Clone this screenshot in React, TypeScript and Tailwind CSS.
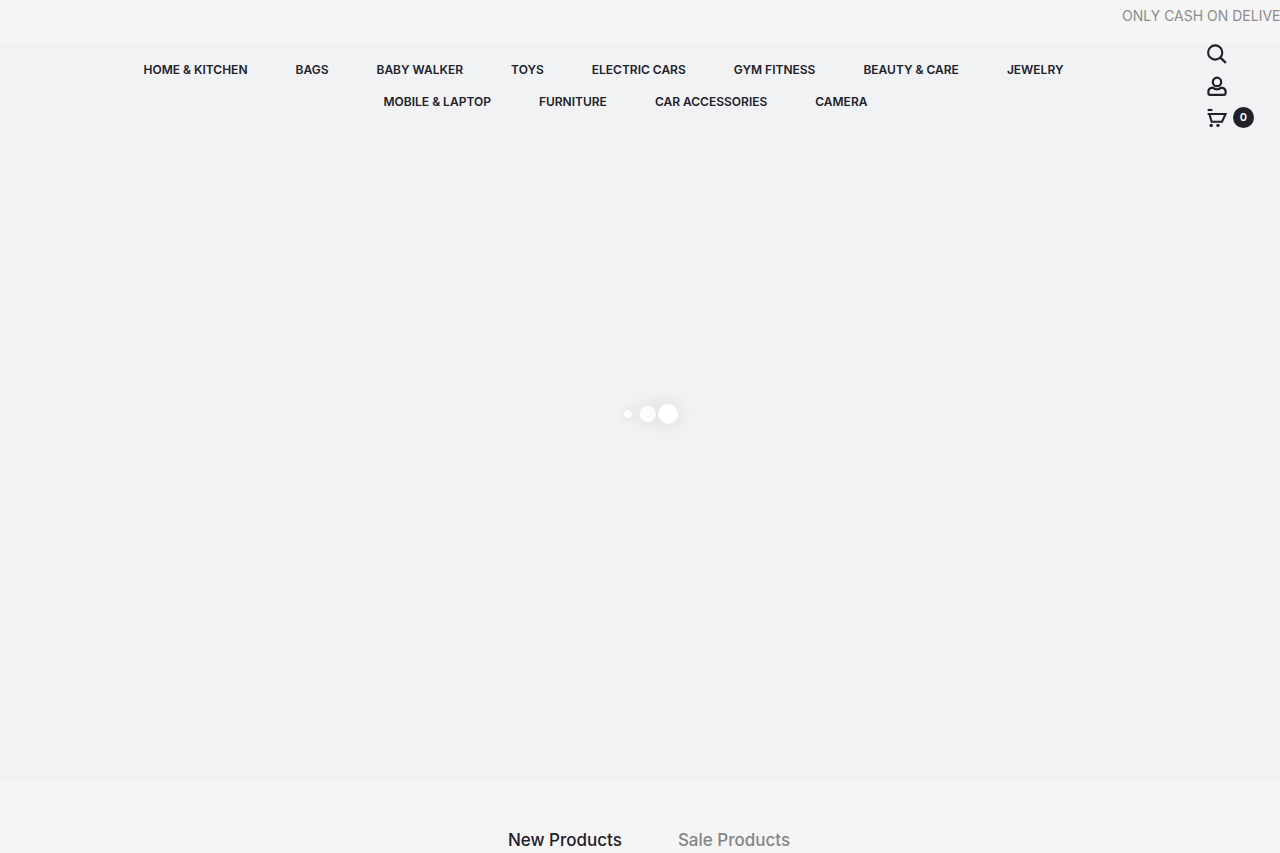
const categories = [
  { label: "HOME & KITCHEN", href: "#home-kitchen" },
  { label: "BAGS", href: "#bags" },
  { label: "BABY WALKER", href: "#baby-walker" },
  { label: "TOYS", href: "#toys" },
  { label: "ELECTRIC CARS", href: "#electric-cars" },
  { label: "GYM FITNESS", href: "#gym-fitness" },
  { label: "BEAUTY & CARE", href: "#beauty-care" },
  { label: "JEWELRY", href: "#jewelry" },
  { label: "MOBILE & LAPTOP", href: "#mobile-laptop" },
  { label: "FURNITURE", href: "#furniture" },
  { label: "CAR ACCESSORIES", href: "#car-accessories" },
  { label: "CAMERA", href: "#camera" },
];

function SearchIcon() {
  return (
    <svg viewBox="0 0 20 20" className="size-5" fill="none" stroke="currentColor" strokeWidth="2.1">
      <circle cx="8.2" cy="8.5" r="7.1" />
      <path d="M13.2 13.6 18.9 18.8" strokeWidth="2.4" />
    </svg>
  );
}

function UserIcon() {
  return (
    <svg viewBox="0 0 20 20" className="size-5" fill="none" stroke="currentColor" strokeWidth="2.2">
      <circle cx="10" cy="5.9" r="4.2" />
      <path
        d="M5.8 11.6C2.9 11.8 1.4 13.4 1.4 15.8v1.8c0 .8.5 1.3 1.3 1.3h14.6c.8 0 1.3-.5 1.3-1.3v-1.8c0-2.4-1.5-4-4.4-4.2-1.2 1.2-2.6 1.7-4.2 1.7s-3-.5-4.2-1.7Z"
        strokeLinejoin="round"
      />
    </svg>
  );
}

function CartIcon() {
  return (
    <svg viewBox="0 0 20 20" className="size-5" fill="none" stroke="currentColor" strokeWidth="2.1">
      <path d="M.6 2h4.8" />
      <path d="M.6 6h18l-3.6 7.8H4.6L2.4 6" />
      <circle cx="4.2" cy="17.4" r="1.7" fill="currentColor" stroke="none" />
      <circle cx="11" cy="17.4" r="1.7" fill="currentColor" stroke="none" />
    </svg>
  );
}

function Header() {
  return (
    <header className="flex items-start pt-3">
      <nav className="flex-1 px-20">
        <ul className="flex flex-wrap justify-center gap-x-1 text-xs font-semibold leading-8">
          {categories.map((item) => (
            <li key={item.label} className="not-first:ml-11">
              <a href={item.href} className="hover:text-gray-500">
                {item.label}
              </a>
            </li>
          ))}
        </ul>
      </nav>

      {/* icons */}
      <div className="-mt-3 flex w-[73px] flex-col items-start">
        <button type="button" aria-label="Search" className="flex h-8 items-start pt-0.5 cursor-pointer">
          <SearchIcon />
        </button>
        <a href="#account" aria-label="Account" className="flex h-8 items-start pt-0.5">
          <UserIcon />
        </a>
        <a href="#cart" aria-label="Cart" className="flex h-[23px] items-center gap-1.5">
          <CartIcon />
          <span className="flex size-[21px] items-center justify-center rounded-full bg-[#212129] text-[11px] font-semibold text-white">
            0
          </span>
        </a>
      </div>
    </header>
  );
}

function SliderLoader() {
  return (
    <div className="absolute inset-0 flex items-center justify-center pl-4 pt-1 pointer-events-none">
      <div className="flex size-5 items-center justify-center">
        <span className="size-2 rounded-full bg-white/90 shadow-[0_0_8px_rgba(0,0,0,0.12)]" />
      </div>
      <div className="flex size-5 items-center justify-center">
        <span className="size-4 rounded-full bg-white/90 shadow-[0_0_18px_rgba(0,0,0,0.13)]" />
      </div>
      <div className="flex size-5 items-center justify-center">
        <span className="size-5 rounded-full bg-white shadow-[0_0_20px_rgba(0,0,0,0.12)]" />
      </div>
    </div>
  );
}

export default function App() {
  return (
    <div className="min-h-screen overflow-x-hidden bg-[#f5f5f5] font-[Inter,sans-serif] text-[#212129]">
      {/* Announcement ticker */}
      <div className="h-[42px] overflow-hidden pt-1">
        <p className="ml-[calc(100%-158px)] whitespace-nowrap text-sm leading-6 text-[#8c8c8c]">
          ONLY CASH ON DELIVERY
        </p>
      </div>

      <section className="relative min-h-[740px] bg-[#f0f2f4]">
        <Header />
        <SliderLoader />
      </section>

      <section className="pt-[46px]">
        <div role="tablist" className="flex justify-center gap-14 pl-[18px] text-[17px] leading-6 font-medium">
          <button type="button" role="tab" aria-selected="true" className="cursor-pointer">
            New Products
          </button>
          <button type="button" role="tab" aria-selected="false" className="cursor-pointer text-[#858588]">
            Sale Products
          </button>
        </div>
      </section>
    </div>
  );
}
